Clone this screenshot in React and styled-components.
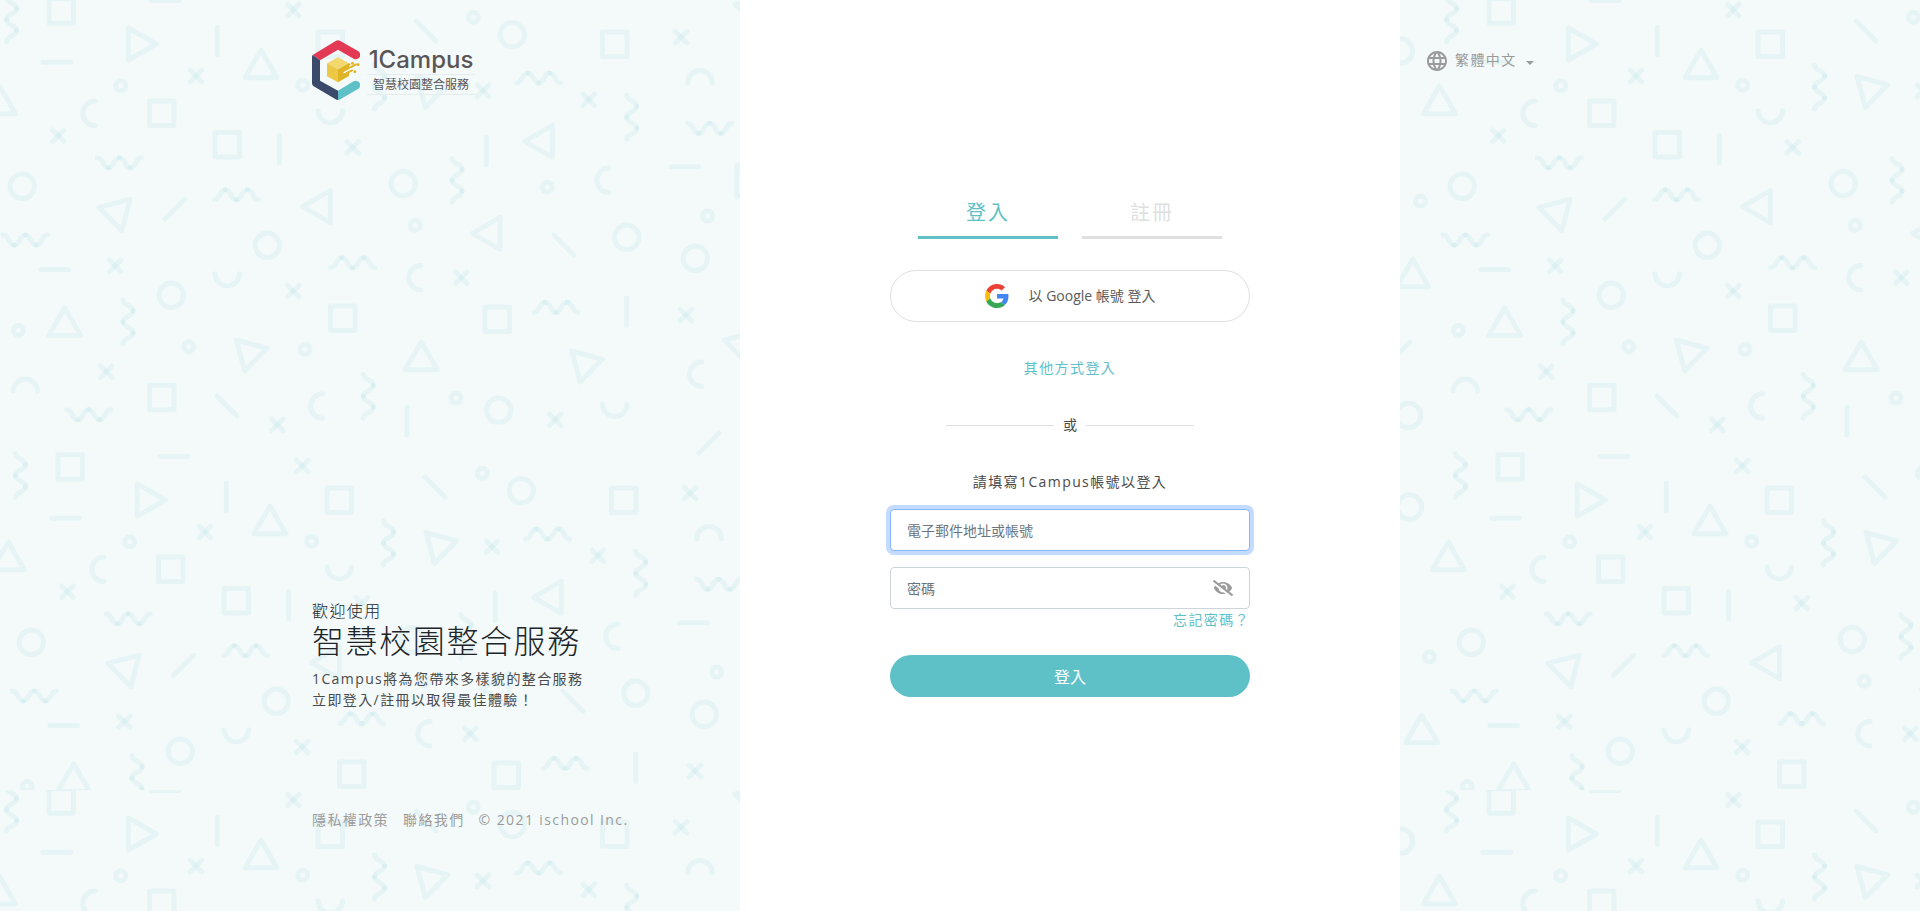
import { useState } from "react"
import styled, { createGlobalStyle } from "styled-components"
import { MdLanguage } from "react-icons/md"
import { FaEye, FaEyeSlash } from "react-icons/fa"

// ---------- background pattern ----------
const wave = (x, y, transform) => `<g transform="translate(${x} ${y}) ${transform}">
<path d="M-22-5c6 0 5 10 11 10"/><path d="M-11 5c6 0 5-10 11-10"/><path d="M0-5c6 0 5 10 11 10"/><path d="M11 5c6 0 5-10 11-10"/></g>`

const draw = {
    circle: (x, y) => `<circle cx="${x}" cy="${y}" r="12.2"/>`,
    dot: (x, y) => `<circle cx="${x}" cy="${y}" r="5"/>`,
    square: (x, y) => `<rect x="${x - 12.2}" y="${y - 12.2}" width="24.4" height="24.4"/>`,
    cross: (x, y) => `<path d="M${x - 5.8} ${y - 5.8}l11.6 11.6"/><path d="M${x + 5.8} ${y - 5.8}l-11.6 11.6"/>`,
    lineH: (x, y) => `<path d="M${x - 13.8} ${y}h27.6"/>`,
    lineV: (x, y) => `<path d="M${x} ${y - 13.8}v27.6"/>`,
    slash: (x, y) => `<path d="M${x - 10} ${y + 10}l20-20"/>`,
    backslash: (x, y) => `<path d="M${x - 10} ${y - 10}l20 20"/>`,
    // triangles start on their first corner
    triUp: (x, y) => `<path d="M${x} ${y}l16 27.7h-32z"/>`,
    triRight: (x, y) => `<path d="M${x} ${y - 16}l28 16-28 16z"/>`,
    triLeft: (x, y) => `<path d="M${x} ${y}l27.7-16v32z"/>`,
    triA: (x, y) => `<path d="M${x} ${y}l31.3-8-8 31.4z"/>`,
    triB: (x, y) => `<path d="M${x} ${y}l30.7 8.3-22.3 22.7z"/>`,
    arcC: (x, y) => `<path d="M${x} ${y - 12.2}a12.2 12.2 0 0 0 0 24.4"/>`,
    arcU: (x, y) => `<path d="M${x - 12.2} ${y}a12.2 12.2 0 0 0 24.4 0"/>`,
    arcN: (x, y) => `<path d="M${x - 12.2} ${y}a12.2 12.2 0 0 1 24.4 0"/>`,
    waveW: (x, y) => wave(x, y, ""),
    waveM: (x, y) => wave(x, y, "scale(1 -1)"),
    waveV: (x, y) => wave(x, y, "rotate(90) scale(1 -1)"),
}

const shapes = {
    circle: [[22.3, 186.3], [267.3, 245.3], [171.3, 295.3], [512.3, 34.7], [403.3, 183.7], [626.7, 237.3], [695.3, 258.3], [498.7, 410.3], [1400.5, 51], [1408.6, 415.5]],
    dot: [[120.7, 85.7], [302.7, 85.3], [18.3, 330.3], [188.7, 346.7], [305, 349.3], [473.3, 17.3], [547.3, 187.3], [707.7, 216], [415.3, 225.3], [456, 398], [1420.4, 201]],
    square: [[61.3, 11], [330.3, 44.3], [161.7, 113.3], [227.3, 144.7], [342.7, 318.3], [161.7, 397.5], [614.7, 44.3], [497.3, 319.3]],
    cross: [[293.3, 10], [196, 76], [58.3, 135.7], [352.7, 147.3], [115.3, 265.7], [293.3, 291], [106.3, 371.7], [277.3, 424.7], [681, 37.3], [483, 90.7], [588.7, 99.7], [461.3, 277.7], [686, 315], [555.3, 419.7]],
    lineH: [[165, 0.5], [56.7, 62.3], [54.7, 269.5], [684.7, 166.7]],
    lineV: [[217.3, 41], [279.5, 149], [486.3, 151], [626.7, 311.7], [407, 421]],
    slash: [[174.7, 209.3], [709, 443], [1400, 352]],
    backslash: [[227, 406], [426, 31], [564, 245.3]],
    triUp: [[261, 50], [-0.6, 86], [1439.4, 86], [64.7, 307.7], [421.3, 342], [1412.7, 259]],
    triRight: [[128.3, 44], [736.7, 181.3]],
    triLeft: [[302.7, 206.7], [524.7, 141.3], [472.3, 233.3]],
    triA: [[98.7, 207.3], [735, 4], [724.3, 340]],
    triB: [[236.3, 340], [417, 76.5], [571.7, 351]],
    arcC: [[95, 113.3], [322.7, 406], [609, 180.3], [421, 277.7], [701.7, 374.3]],
    arcU: [[330.3, 110.7], [227.3, 273.7], [614.7, 404.3]],
    arcN: [[25.3, 391.3], [700, 82.7]],
    waveW: [[119.3, 162.7], [25.3, 240], [88.7, 414.7], [709.7, 128.3]],
    waveM: [[236.3, 194.7], [352.7, 262.7], [538.7, 78], [556, 307.3]],
    waveV: [[11.5, 19.5], [379.5, 87], [128, 321.7], [368.3, 396.3], [631.7, 117.3], [457, 180.3]],
}

const marks = Object.entries(shapes)
    .map(([kind, places]) => places.map(([x, y]) => draw[kind](x, y)).join(""))
    .join("")

const tile = `<svg xmlns="http://www.w3.org/2000/svg" width="1440" height="790">
<g fill="none" stroke="#5ec1c8" stroke-opacity=".09" stroke-width="5" stroke-linecap="round" stroke-linejoin="round">
${marks}<g transform="translate(9 456)">${marks}</g></g></svg>`

const GlobalStyle = createGlobalStyle`
    *, *::before, *::after {
        box-sizing: border-box;
    }
    body {
        margin: 0;
        background: #f4fafa url("data:image/svg+xml,${encodeURIComponent(tile)}");
        font-family: "Open Sans", "Noto Sans CJK TC", sans-serif;
        font-size: 14px;
        color: #212529;
    }
    button, input, select {
        font: inherit;
    }
`

const Page = styled.div`
    display: grid;
    grid-template-columns: 37fr 33fr 26fr;
    min-height: 100vh;
`

// ---------- left side ----------
const Intro = styled.section`
    width: 428px;
    max-width: 100%;
    margin-left: auto;
    padding: 40px 0 79px;
    display: flex;
    flex-direction: column;
    letter-spacing: 0.1em;
`
const Brand = styled.a`
    display: flex;
    gap: 7px;
    color: #5a5657;
    text-decoration: none;
    letter-spacing: normal;
`
const BrandText = styled.span`
    display: flex;
    flex-direction: column;
    align-items: center;
    padding-top: 5px;
`
const BrandName = styled.span`
    font-family: Inter, sans-serif;
    font-weight: 500;
    font-size: 24px;
    line-height: 29px;
`
const BrandSub = styled.span`
    padding: 0 6px;
    border: solid #e4ecec;
    border-width: 1px 0;
    font-size: 12px;
    line-height: 19px;
`
const Welcome = styled.p`
    margin: auto 0 0;
    font-size: 16px;
    font-weight: 300;
    line-height: 22px;
`
const Title = styled.h1`
    margin: 0 0 8px;
    font-weight: 300;
    font-size: 32px;
    line-height: 38px;
    letter-spacing: 0.05em;
`
const Lead = styled.p`
    margin: 0;
    line-height: 21px;
    color: #4a4a4a;
`
const Footer = styled.footer`
    display: flex;
    gap: 14px;
    margin-top: 98px;
    line-height: 24px;
    color: #9b9b9b;
`
const FooterLink = styled.a`
    color: inherit;
    text-decoration: none;
`

// ---------- form ----------
const Panel = styled.main`
    background: white;
    padding-top: 192px;
`
const Form = styled.form`
    width: 360px;
    margin: 0 auto;
    display: flex;
    flex-direction: column;
    align-items: center;
`
const Tabs = styled.div`
    display: flex;
    gap: 24px;
    margin-bottom: 31px;
`
const Tab = styled.button`
    width: 140px;
    padding: 9px 0 11px;
    border: 0;
    border-bottom: 3px solid ${({ $active }) => ($active ? "#5ec1c8" : "#dfdfdf")};
    background: none;
    color: ${({ $active }) => ($active ? "#5ec1c8" : "#dfdfdf")};
    font-size: 20px;
    line-height: 24px;
    letter-spacing: 0.1em;
    cursor: pointer;
`
const GoogleButton = styled.button`
    width: 100%;
    height: 52px;
    display: flex;
    align-items: center;
    justify-content: center;
    gap: 20px;
    border: 1px solid #dfdfdf;
    border-radius: 26px;
    background: white;
    color: #5a5a5a;
    cursor: pointer;
`
const GoogleLabel = styled.span`
    padding-bottom: 3px;
`
const TextLink = styled.a`
    color: #5ec1c8;
    text-decoration: none;
    line-height: 24px;
    letter-spacing: 0.1em;
`
const OtherLink = styled(TextLink)`
    margin: 34px 0 33px;
`
const ForgotLink = styled(TextLink)`
    align-self: flex-end;
    line-height: 22px;
`
const Divider = styled.div`
    width: 248px;
    display: flex;
    align-items: center;
    gap: 9px;
    line-height: 24px;
    color: #4a4a4a;

    &::before,
    &::after {
        content: "";
        flex: 1;
        height: 1px;
        background: #dfdfdf;
    }
`
const Hint = styled.p`
    margin: 33px 0 15px;
    line-height: 24px;
    letter-spacing: 0.1em;
    color: #4a4a4a;
`
const Field = styled.div`
    position: relative;
    width: 100%;
    margin-top: ${({ $spaced }) => ($spaced ? "16px" : "0")};
`
const Input = styled.input`
    display: block;
    width: 100%;
    height: 42px;
    padding: 0 16px;
    border: 1px solid #ced4da;
    border-radius: 4px;
    background: white;
    color: #212529;

    &::placeholder {
        color: #6c757d;
        opacity: 1;
    }
    &:focus {
        outline: 0;
        border-color: #86b7fe;
        box-shadow: 0 0 0 4px rgba(13, 110, 253, 0.25);
    }
`
const EyeButton = styled.button`
    position: absolute;
    top: 0;
    right: 17px;
    height: 42px;
    padding: 0;
    border: 0;
    display: flex;
    align-items: center;
    background: none;
    color: #9b9b9b;
    font-size: 20px;
    cursor: pointer;
`
const Submit = styled.button`
    width: 100%;
    height: 42px;
    margin-top: 24px;
    border: 0;
    border-radius: 21px;
    background: #5ec1c8;
    color: white;
    font-size: 16px;
    cursor: pointer;
`

// ---------- language ----------
const Language = styled.label`
    align-self: start;
    display: flex;
    align-items: center;
    padding: 49px 0 0 25px;
    color: #9b9b9b;
    font-size: 24px;
`
const Select = styled.select`
    appearance: none;
    margin-left: 6px;
    padding: 0 0 2px;
    border: 0;
    background: none;
    color: inherit;
    font-size: 14px;
    line-height: 22px;
    letter-spacing: 0.1em;
`
const Caret = styled.span`
    margin: 4px 0 0 9px;
    border: 4px solid transparent;
    border-top-color: currentColor;
    border-bottom: 0;
`

const LogoMark = () => (
    <svg width="48" height="60" viewBox="0 0 144 180" aria-hidden="true">
        <path fill="#e43954" d="M2 45L71 3q7-5 14 0l53 30a13 13 0 0 1-13 23L78 29 24 61z" />
        <path fill="#3b4a6b" d="M2 45l22 16v61l54 30v28q-4 0-7-2L5 139q-5-3-5-9V51q0-4 2-6z" />
        <path fill="#5ec1c8" d="M78 180q4 0 7-2l53-31a13 13 0 0 0-13-23l-47 28z" />
        <path fill="#f3d86f" d="M78 52l33 18-33 18-33-18z" />
        <path fill="#ecc844" d="M45 70l33 18v39l-33-18z" />
        <path fill="#dfb526" d="M78 88l33-18v38l-33 19z" />
        <g stroke="#dfb526" strokeWidth="6" strokeLinecap="round">
            <path d="M100 80l13-7M104 88l28-15M100 102l20-11" />
            <path d="M121 70h1M138 74h1M128 95h1" strokeWidth="8" />
        </g>
        <path d="M96 98l22-12" stroke="white" strokeWidth="4" strokeLinecap="round" />
    </svg>
)

const GoogleLogo = () => (
    <svg width="24" height="24" viewBox="0 0 48 48" aria-hidden="true">
        <path fill="#EA4335" d="M24 9.5c3.54 0 6.71 1.22 9.21 3.6l6.85-6.85C35.9 2.38 30.47 0 24 0 14.62 0 6.51 5.38 2.56 13.22l7.98 6.19C12.43 13.72 17.74 9.5 24 9.5z" />
        <path fill="#4285F4" d="M46.98 24.55c0-1.57-.15-3.09-.38-4.55H24v9.02h12.94c-.58 2.96-2.26 5.48-4.78 7.18l7.73 6c4.51-4.18 7.09-10.36 7.09-17.65z" />
        <path fill="#FBBC05" d="M10.53 28.59c-.48-1.45-.76-2.99-.76-4.59s.27-3.14.76-4.59l-7.98-6.19C.92 16.46 0 20.12 0 24c0 3.88.92 7.54 2.56 10.78l7.97-6.19z" />
        <path fill="#34A853" d="M24 48c6.48 0 11.93-2.13 15.89-5.81l-7.73-6c-2.15 1.45-4.92 2.3-8.16 2.3-6.26 0-11.57-4.22-13.47-9.91l-7.98 6.19C6.51 42.62 14.62 48 24 48z" />
    </svg>
)

const App = () => {
    const [tab, setTab] = useState("login")
    const [visible, setVisible] = useState(false)

    return (
        <>
            <GlobalStyle />
            <Page>
                <Intro>
                    <Brand href="#">
                        <LogoMark />
                        <BrandText>
                            <BrandName>1Campus</BrandName>
                            <BrandSub>智慧校園整合服務</BrandSub>
                        </BrandText>
                    </Brand>
                    <Welcome>歡迎使用</Welcome>
                    <Title>智慧校園整合服務</Title>
                    <Lead>
                        1Campus將為您帶來多樣貌的整合服務
                        <br />
                        立即登入/註冊以取得最佳體驗！
                    </Lead>
                    <Footer>
                        <FooterLink href="#">隱私權政策</FooterLink>
                        <FooterLink href="#">聯絡我們</FooterLink>
                        <span>© 2021 ischool Inc.</span>
                    </Footer>
                </Intro>

                <Panel>
                    <Form onSubmit={(e) => e.preventDefault()}>
                        <Tabs>
                            <Tab type="button" $active={tab === "login"} onClick={() => setTab("login")}>登入</Tab>
                            <Tab type="button" $active={tab === "signup"} onClick={() => setTab("signup")}>註冊</Tab>
                        </Tabs>
                        <GoogleButton type="button">
                            <GoogleLogo />
                            <GoogleLabel>以 Google 帳號 登入</GoogleLabel>
                        </GoogleButton>
                        <OtherLink href="#">其他方式登入</OtherLink>
                        <Divider>或</Divider>
                        <Hint>請填寫1Campus帳號以登入</Hint>
                        <Field>
                            <Input type="text" aria-label="電子郵件地址或帳號" placeholder="電子郵件地址或帳號" autoFocus />
                        </Field>
                        <Field $spaced>
                            <Input type={visible ? "text" : "password"} aria-label="密碼" placeholder="密碼" />
                            <EyeButton type="button" aria-label="顯示密碼" onClick={() => setVisible(!visible)}>
                                {visible ? <FaEye /> : <FaEyeSlash />}
                            </EyeButton>
                        </Field>
                        <ForgotLink href="#">忘記密碼？</ForgotLink>
                        <Submit type="submit">登入</Submit>
                    </Form>
                </Panel>

                <Language>
                    <MdLanguage />
                    <Select aria-label="語言" defaultValue="zh">
                        <option value="zh">繁體中文</option>
                    </Select>
                    <Caret />
                </Language>
            </Page>
        </>
    )
}

export default App
